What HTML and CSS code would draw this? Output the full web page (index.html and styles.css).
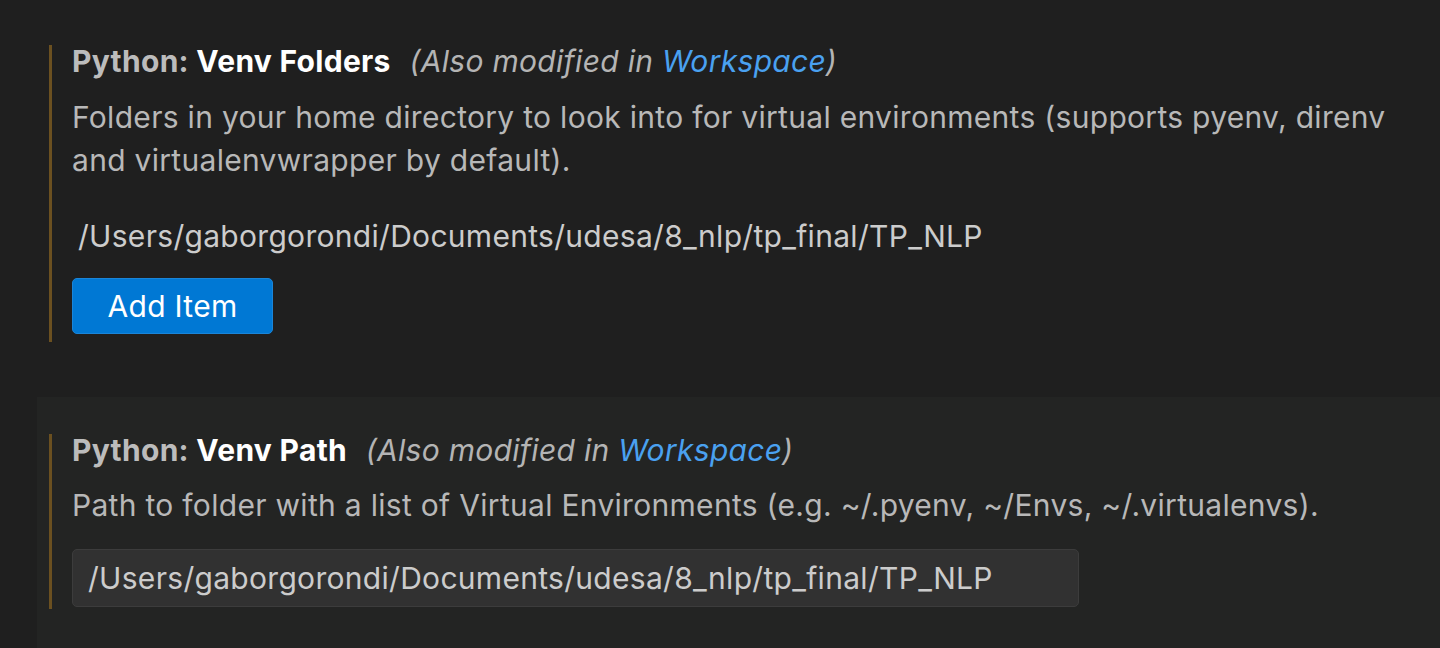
FILE: index.html
```html
<!DOCTYPE html>
<html>
<head>
<meta charset="utf-8">
<link rel="stylesheet" href="styles.css">
</head>
<body>
<div class="settings">
  <section class="setting">
    <div class="setting-body list-setting">
      <div class="title">
        <span class="category">Python: </span><span class="label">Venv Folders</span>
        <span class="modified">(Also modified in <a class="link">Workspace</a>)</span>
      </div>
      <div class="desc">Folders in your home directory to look into for virtual environments (supports pyenv, direnv and virtualenvwrapper by default).</div>
      <div class="list-item">/Users/gaborgorondi/Documents/udesa/8_nlp/tp_final/TP_NLP</div>
      <button class="btn">Add Item</button>
    </div>
  </section>
  <section class="setting focused">
    <div class="setting-body text-setting">
      <div class="title">
        <span class="category">Python: </span><span class="label">Venv Path</span>
        <span class="modified">(Also modified in <a class="link">Workspace</a>)</span>
      </div>
      <div class="desc">Path to folder with a list of Virtual Environments (e.g. ~/.pyenv, ~/Envs, ~/.virtualenvs).</div>
      <div class="input">/Users/gaborgorondi/Documents/udesa/8_nlp/tp_final/TP_NLP</div>
    </div>
  </section>
</div>
</body>
</html>
```
FILE: styles.css
```css
html, body {
  margin: 0;
  padding: 0;
  background: #1f1f1f;
  height: 100%;
  overflow: hidden;
}
body {
  font-family: Inter, "Noto Sans", sans-serif;
  font-size: 30px;
  letter-spacing: 0.3px;
  color: #cccccc;
}
.settings {
  padding-top: 8px;
}
.setting {
  margin-left: 37px;
  padding: 37px 0 55px 12px;
}
.setting.focused {
  background: #232423;
  padding-bottom: 60px;
}
.setting-body {
  border-left: 3px solid #6b5020;
  padding-left: 20px;
}
.list-setting {
  padding-bottom: 8px;
}
.text-setting {
  padding-bottom: 2px;
}
.title {
  height: 32px;
  line-height: 32px;
  white-space: nowrap;
}
.category {
  font-weight: 700;
  color: #bcbcbc;
}
.label {
  font-weight: 700;
  color: #ffffff;
}
.modified {
  font-style: italic;
  color: #b4b4b4;
  margin-left: 10px;
}
.link {
  color: #4aa1f0;
}
.desc {
  margin-top: 19px;
  line-height: 43px;
  color: #b8b8b8;
  max-width: 1345px;
}
.list-item {
  margin-top: 30px;
  height: 48px;
  line-height: 48px;
  padding-left: 6px;
  color: #cccccc;
}
.btn {
  margin-top: 18px;
  display: block;
  width: 201px;
  height: 56px;
  background: #0078d4;
  border: 1px solid #1a85d8;
  border-radius: 5px;
  color: #ffffff;
  font-family: inherit;
  font-size: 30px;
  letter-spacing: 0.3px;
  padding: 0;
}
.text-setting .desc {
  margin-top: 18px;
}
.input {
  margin-top: 22px;
  width: 1007px;
  height: 58px;
  box-sizing: border-box;
  background: #313131;
  border: 1px solid #3c3c3c;
  border-radius: 5px;
  line-height: 56px;
  padding-left: 15px;
  color: #cccccc;
}
```
